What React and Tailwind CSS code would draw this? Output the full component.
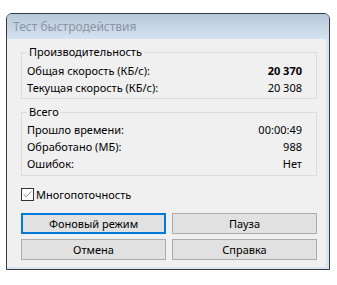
import { Check } from 'lucide-react'

function Row({ label, value, bold }) {
  return (
    <div className="flex justify-between h-[17px] leading-[17px]">
      <span>{label}</span>
      <span className={bold ? 'font-bold' : ''}>{value}</span>
    </div>
  )
}

function Group({ title, children, className }) {
  return (
    <fieldset className={`border border-[#dcdcdc] pl-[5px] pr-[14px] ${className}`}>
      <legend className="px-[2px] leading-[16px]">{title}</legend>
      {children}
    </fieldset>
  )
}

function Button({ children, focused }) {
  return (
    <button
      className={`h-[21px] bg-[#e1e1e1] text-[11px] leading-none ${
        focused ? 'border-2 border-[#0078d7]' : 'border border-[#adadad]'
      }`}
    >
      {children}
    </button>
  )
}

export default function App() {
  return (
    <div className="w-[337px] h-[285px] bg-white pt-[13px] pl-[6px] text-[11px] text-black" style={{ fontFamily: '"Noto Sans", sans-serif' }}>
      <div className="w-[324px] border border-[#3a3a3a] rounded-t-[6px] overflow-hidden">
        {/* title bar */}
        <div className="h-[25px] bg-gradient-to-b from-[#b7c8da] to-[#d5e2f0] pl-[6px] flex items-center text-[12px] text-[#8a95a1]">
          Тест быстродействия
        </div>

        {/* body */}
        <div className="bg-[#f0f0f0] border-r-[3px] border-b-[2px] border-[#d6e3f1] pl-[14px] pr-[9px] pt-[5px] pb-[7px]">
          <Group title="Производительность" className="pt-[2px] pb-[2px]">
            <Row label="Общая скорость (КБ/с):" value="20 370" bold />
            <Row label="Текущая скорость (КБ/с):" value="20 308" />
          </Group>

          <Group title="Всего" className="mt-[5px] pt-[1px] pb-[3px]">
            <Row label="Прошло времени:" value="00:00:49" />
            <Row label="Обработано (МБ):" value="988" />
            <Row label="Ошибок:" value="Нет" />
          </Group>

          <label className="flex items-center mt-[12px] h-[13px]">
            <span className="w-[13px] h-[13px] border border-[#333] bg-white flex items-center justify-center">
              <Check size={11} strokeWidth={1.25} className="text-[#333]" />
            </span>
            <span className="ml-[2px] leading-[13px]">Многопоточность</span>
          </label>

          <div className="grid grid-cols-2 gap-x-[6px] gap-y-[5px] mt-[12px]">
            <Button focused>Фоновый режим</Button>
            <Button>Пауза</Button>
            <Button>Отмена</Button>
            <Button>Справка</Button>
          </div>
        </div>
      </div>
    </div>
  )
}
